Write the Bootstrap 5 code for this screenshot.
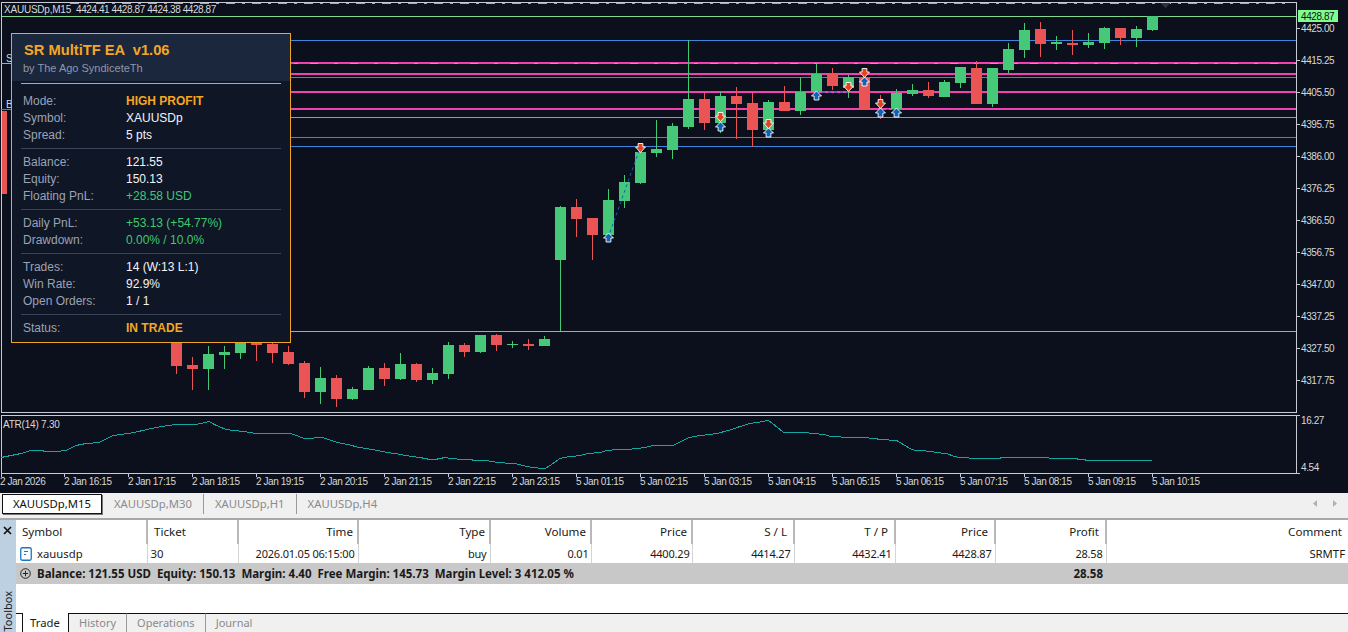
<!DOCTYPE html>
<html lang="en">
<head>
<meta charset="utf-8">
<title>XAUUSDp,M15</title>
<link href="https://cdn.jsdelivr.net/npm/bootstrap@5.3.0/dist/css/bootstrap.min.css" rel="stylesheet">
<style>
html,body{height:632px;overflow:hidden;background:#fff}
.mt-root{width:1348px;height:632px;font-family:"Noto Sans","Open Sans",sans-serif;font-size:11.3px;color:#1a1a1a}
.chart-wrap{height:493px;background:#0b101c}
.chart-svg{display:block}
.chart-svg text{font-family:"Liberation Sans",sans-serif;font-size:10px;fill:#d8d8d8;letter-spacing:-.42px}
.chart-svg text.txt-wide{letter-spacing:-.22px}
.ea-panel{position:absolute;left:11px;top:33px;width:280px;height:310px;background:#0f1626;border:1px solid #f0a52a;font-family:"Liberation Sans",Arial,sans-serif;font-size:12px;line-height:17px;color:#9aa3b5}
.ea-head{height:47px;background:#1a273c;padding:7px 0 0 12px}
.ea-title{font-size:14.7px;font-weight:700;color:#f5a623;line-height:18px;white-space:pre}
.ea-sub{font-size:11px;color:#8f98aa;line-height:14px;margin-top:2px;margin-left:-1px}
.ea-rule-o{height:1px;background:#f0a52a;margin:2px 9px 0}
.ea-sec{margin:0 9px;padding:0 2px;border-top:1px solid #3a4258}
.ea-sec.first{border-top:0;padding-top:9px;padding-bottom:4px}
.ea-s2{padding-top:5px;padding-bottom:4px}
.ea-s3{padding-top:5px;padding-bottom:4px}
.ea-s4{padding-top:5px}
.ea-lab{width:103px}
.v-w{color:#f2f4f8}.v-g{color:#3fc96f}.v-o{color:#f5a623;font-weight:700}
.sym-tabs{height:27px;background:#f0f0f0;border-bottom:2px solid #a8a8a8;padding-left:2px}
.sym-on{width:100px;height:20px;margin-top:1px;background:#fff;border:1px solid #111;box-shadow:1px 1px 0 #777;padding-left:10px;line-height:18px;color:#111}
.sym-off{color:#8a8a8a;line-height:20px;padding:0 11px;margin-top:1px;height:20px}
.sym-on + .sym-off{padding-left:12px}
.sym-sep{border-right:1px solid #9a9a9a}
.sym-arrows{margin-left:auto;padding-right:11px;gap:16px;height:20px}
.tool-rail{width:16px;background:#bcd0e2;position:relative;overflow:hidden}
.tool-x{position:absolute;left:2px;top:5px;width:11px;height:11px}
.tool-name{position:absolute;left:0;bottom:0;writing-mode:vertical-rl;transform:rotate(180deg);font-size:11px;line-height:15px;color:#222}
.grid-tab{width:100%;table-layout:fixed;border-collapse:collapse;color:#1a1a1a}
.grid-tab th{font-weight:400;font-size:11.6px;height:24px;padding:0 6px;border-right:2px solid #b8b8b8;white-space:nowrap;overflow:hidden}
.grid-tab th:nth-child(n+3):nth-child(-n+6){padding-right:4px}
.grid-tab td{height:19px;padding:0 3px;border-right:1px solid #d4d4d4;white-space:nowrap;overflow:hidden;line-height:18px}
.grid-tab td.text-end{font-size:11px;letter-spacing:-.2px}
.grid-tab td:nth-child(5),.grid-tab td:nth-child(6){padding-right:2px}
.grid-tab td:last-child{font-size:11.3px;letter-spacing:0}
.grid-tab th:last-child,.grid-tab td:last-child{border-right:0}
.sum-row{height:21px;background:#c8c8c8;font-weight:700;font-size:11.5px;position:relative;white-space:pre;line-height:21px;padding-left:21px}
.sum-profit{position:absolute;left:1007px;width:80px;text-align:right;top:0}
.plus-ico{position:absolute;left:4px;top:5px}
.sym-ico{vertical-align:-3px;margin:0 5px 0 1px}
.bot-tabs{height:19px;position:relative}
.bot-line{border-top:1px solid #111;background:#f0f0f0;height:19px;flex:1}
.bot-stub{width:6px;border-top:1px solid #111;height:19px}
.bot-on{width:47px;height:19px;background:#fff;border-left:1px solid #111;border-right:1px solid #111;text-align:center;line-height:19px;padding-right:1px}
.bot-off{border-top:1px solid #111;background:#f0f0f0;color:#8a8a8a;height:19px;line-height:18px;padding:0 10px;font-size:11px}
</style>
</head>
<body>
<div class="mt-root d-flex flex-column">
  <div class="chart-wrap position-relative flex-shrink-0">
    <svg class="chart-svg" id="chart" width="1348" height="493" viewBox="0 0 1348 493" xmlns="http://www.w3.org/2000/svg" shape-rendering="crispEdges">
      <g id="frame" fill="none" stroke="#c9cbd2">
        <path d="M1.5 2.5H1296.5V412.5H1.5Z"/>
        <path d="M1.5 415.5H1296.5V473.5H1.5Z"/>
        <path d="M1296 28.5h4M1296 60.5h4M1296 92.5h4M1296 124.5h4M1296 156.5h4M1296 188.5h4M1296 220.5h4M1296 252.5h4M1296 284.5h4M1296 316.5h4M1296 348.5h4M1296 380.5h4M1296 415.5h4M1296 473.5h4"/>
        <path d="M64.5 473v4M128.5 473v4M192.5 473v4M256.5 473v4M320.5 473v4M384.5 473v4M448.5 473v4M512.5 473v4M576.5 473v4M640.5 473v4M704.5 473v4M768.5 473v4M832.5 473v4M896.5 473v4M960.5 473v4M1024.5 473v4M1088.5 473v4M1152.5 473v4M1.5 473v4"/>
      </g>
      <path d="M70 3.5H1292" stroke="#dd9f6c" stroke-dasharray="9 7 3 7" fill="none"/>
      <polygon points="1161,3 1170,3 1165.5,8" fill="#2b3140"/>
      <g fill="none" stroke="#3f86dc">
        <path d="M150 40.5H1296M150 77.5H1296M150 137.5H1296M150 146.5H1296M1 109.5H11"/>
        <path d="M150 117.5H1296" stroke="#7fa0c4"/>
      </g>
      <path d="M1 63.5H11" stroke="#e89b5a"/>
      <path d="M150 331.5H1296" stroke="#a5a8b0"/>
      <path d="M2 16.5H1296" stroke="#83d88f"/>
      <rect x="2" y="111" width="5" height="83" fill="#e95455"/>
      <g fill="#f23fb2">
        <rect x="150" y="62" width="1146" height="2"/>
        <rect x="150" y="73" width="1146" height="2"/>
        <rect x="150" y="91" width="1146" height="2"/>
        <rect x="150" y="108" width="1146" height="2"/>
      </g>
      <path d="M150 63.5H1296" stroke="#e39a5c" stroke-dasharray="8 16 4 12" fill="none"/>
      <g id="candles"></g>
      <g fill="none" stroke="#0f62b4" stroke-dasharray="3 3" shape-rendering="auto">
        <path d="M608 238L640 148"/>
        <path d="M816 92H848"/>
        <path d="M880 109.5H896"/>
      </g>
      <g id="arrows" shape-rendering="auto"></g>
      <polyline id="atr" fill="none" stroke="#14a7a2" stroke-width="1"/>
      <text x="4" y="12.5" class="txt-wide">XAUUSDp,M15</text>
      <text x="76" y="12.5">4424.41 4428.87 4424.38 4428.87</text>
      <text x="6" y="62">S</text>
      <text x="6" y="108">B</text>
      <text x="3" y="428" class="txt-wide">ATR(14) 7.30</text>
      <rect x="1298" y="10" width="40" height="12" fill="#7dff8f"/>
      <text x="1301" y="20" style="fill:#111">4428.87</text>
      <text x="1301" y="32">4425.00</text>
      <text x="1301" y="64">4415.25</text>
      <text x="1301" y="96">4405.50</text>
      <text x="1301" y="128">4395.75</text>
      <text x="1301" y="160">4386.00</text>
      <text x="1301" y="192">4376.25</text>
      <text x="1301" y="224">4366.50</text>
      <text x="1301" y="256">4356.75</text>
      <text x="1301" y="288">4347.00</text>
      <text x="1301" y="320">4337.25</text>
      <text x="1301" y="352">4327.50</text>
      <text x="1301" y="384">4317.75</text>
      <text x="1301" y="424">16.27</text>
      <text x="1301" y="471">4.54</text>
      <text x="0" y="485">2 Jan 2026</text>
      <text x="64" y="485">2 Jan 16:15</text>
      <text x="128" y="485">2 Jan 17:15</text>
      <text x="192" y="485">2 Jan 18:15</text>
      <text x="256" y="485">2 Jan 19:15</text>
      <text x="320" y="485">2 Jan 20:15</text>
      <text x="384" y="485">2 Jan 21:15</text>
      <text x="448" y="485">2 Jan 22:15</text>
      <text x="512" y="485">2 Jan 23:15</text>
      <text x="576" y="485">5 Jan 01:15</text>
      <text x="640" y="485">5 Jan 02:15</text>
      <text x="704" y="485">5 Jan 03:15</text>
      <text x="768" y="485">5 Jan 04:15</text>
      <text x="832" y="485">5 Jan 05:15</text>
      <text x="896" y="485">5 Jan 06:15</text>
      <text x="960" y="485">5 Jan 07:15</text>
      <text x="1024" y="485">5 Jan 08:15</text>
      <text x="1088" y="485">5 Jan 09:15</text>
      <text x="1152" y="485">5 Jan 10:15</text>
    </svg>
    <div class="ea-panel">
      <div class="ea-head">
        <div class="ea-title">SR MultiTF EA  v1.06</div>
        <div class="ea-sub">by The Ago SyndiceteTh</div>
      </div>
      <div class="ea-rule-o"></div>
      <div class="ea-sec first">
        <div class="d-flex"><span class="ea-lab">Mode:</span><span class="v-o">HIGH PROFIT</span></div>
        <div class="d-flex"><span class="ea-lab">Symbol:</span><span class="v-w">XAUUSDp</span></div>
        <div class="d-flex"><span class="ea-lab">Spread:</span><span class="v-w">5 pts</span></div>
      </div>
      <div class="ea-sec ea-s2">
        <div class="d-flex"><span class="ea-lab">Balance:</span><span class="v-w">121.55</span></div>
        <div class="d-flex"><span class="ea-lab">Equity:</span><span class="v-w">150.13</span></div>
        <div class="d-flex"><span class="ea-lab">Floating PnL:</span><span class="v-g">+28.58 USD</span></div>
      </div>
      <div class="ea-sec ea-s2">
        <div class="d-flex"><span class="ea-lab">Daily PnL:</span><span class="v-g">+53.13 (+54.77%)</span></div>
        <div class="d-flex"><span class="ea-lab">Drawdown:</span><span class="v-g">0.00% / 10.0%</span></div>
      </div>
      <div class="ea-sec ea-s3">
        <div class="d-flex"><span class="ea-lab">Trades:</span><span class="v-w">14 (W:13 L:1)</span></div>
        <div class="d-flex"><span class="ea-lab">Win Rate:</span><span class="v-w">92.9%</span></div>
        <div class="d-flex"><span class="ea-lab">Open Orders:</span><span class="v-w">1 / 1</span></div>
      </div>
      <div class="ea-sec ea-s4">
        <div class="d-flex"><span class="ea-lab">Status:</span><span class="v-o">IN TRADE</span></div>
      </div>
    </div>
  </div>

  <div class="sym-tabs d-flex flex-shrink-0">
    <div class="sym-on">XAUUSDp,M15</div>
    <div class="sym-off sym-sep">XAUUSDp,M30</div>
    <div class="sym-off sym-sep">XAUUSDp,H1</div>
    <div class="sym-off">XAUUSDp,H4</div>
    <div class="sym-arrows d-flex align-items-center">
      <svg width="4" height="7" viewBox="0 0 4 7"><path d="M4 0V7L0 3.5Z" fill="#b0b0b0"/></svg>
      <svg width="4" height="7" viewBox="0 0 4 7"><path d="M0 0V7L4 3.5Z" fill="#b0b0b0"/></svg>
    </div>
  </div>

  <div class="d-flex flex-grow-1" style="min-height:0">
    <div class="tool-rail flex-shrink-0">
      <svg class="tool-x" viewBox="0 0 11 11"><path d="M2 2L9 9M9 2L2 9" stroke="#111" stroke-width="1.7" fill="none"/></svg>
      <div class="tool-name">Toolbox</div>
    </div>
    <div class="d-flex flex-column flex-grow-1" style="min-width:0">
      <table class="grid-tab">
        <colgroup><col style="width:131px"><col style="width:91px"><col style="width:120px"><col style="width:132px"><col style="width:101px"><col style="width:101px"><col style="width:102px"><col style="width:101px"><col style="width:100px"><col style="width:111px"><col></colgroup>
        <thead><tr>
          <th>Symbol</th><th>Ticket</th><th class="text-end">Time</th><th class="text-end">Type</th><th class="text-end">Volume</th><th class="text-end">Price</th><th class="text-end">S / L</th><th class="text-end">T / P</th><th class="text-end">Price</th><th class="text-end">Profit</th><th class="text-end">Comment</th>
        </tr></thead>
        <tbody><tr>
          <td><svg class="sym-ico" width="12" height="14" viewBox="0 0 12 14"><rect x=".75" y=".75" width="10.5" height="12.5" rx="1.5" fill="#fff" stroke="#1976c8" stroke-width="1.3"/><path d="M4 4.5h4M4 7.5h2" stroke="#1976c8"/></svg>xauusdp</td>
          <td>30</td><td class="text-end">2026.01.05 06:15:00</td><td class="text-end">buy</td><td class="text-end">0.01</td><td class="text-end">4400.29</td><td class="text-end">4414.27</td><td class="text-end">4432.41</td><td class="text-end">4428.87</td><td class="text-end">28.58</td><td class="text-end">SRMTF</td>
        </tr></tbody>
      </table>
      <div class="sum-row flex-shrink-0"><svg class="plus-ico" width="11" height="11" viewBox="0 0 11 11"><circle cx="5.5" cy="5.5" r="4.8" fill="none" stroke="#222"/><path d="M2.8 5.5h5.4M5.5 2.8v5.4" stroke="#222"/></svg>Balance: 121.55 USD  Equity: 150.13  Margin: 4.40  Free Margin: 145.73  Margin Level: 3 412.05 %<span class="sum-profit">28.58</span></div>
      <div class="flex-grow-1"></div>
      <div class="bot-tabs d-flex flex-shrink-0">
        <div class="bot-stub"></div>
        <div class="bot-on">Trade</div>
        <div class="bot-off sym-sep">History</div>
        <div class="bot-off sym-sep">Operations</div>
        <div class="bot-off">Journal</div>
        <div class="bot-line"></div>
      </div>
    </div>
  </div>
</div>
<script src="https://cdn.jsdelivr.net/npm/bootstrap@5.3.0/dist/js/bootstrap.bundle.min.js"></script>
<script>
const NS='http://www.w3.org/2000/svg';
const G='#45c878',R='#ea5455';
// colour, body top, body bottom, wick high, wick low; one entry per bar, 16px apart from x=171
const bars=[
[R,335,366,330,374],[R,365,369,357,390],[G,354,369,346,390],[G,352,355,346,369],[G,340,353,335,359],[R,338,345,335,361],[R,344,353,340,363],[R,352,364,346,365],
[R,363,392,361,398],[G,378,392,367,404],[R,378,399,375,407],[G,389,399,387,400],[G,368,390,366,390],[R,368,379,363,386],[G,364,379,353,380],[R,364,380,363,382],
[G,373,380,368,384],[G,345,374,342,379],[R,345,352,343,357],[G,335,352,335,353],[R,335,345,334,351],[G,344,345,341,348],[R,344,346,339,350],[G,339,346,336,346],
[G,207,260,206,331],[R,207,219,199,237],[R,218,235,218,260],[G,200,235,189,235],[G,182,201,175,208],[G,152,183,152,184],[G,149,153,120,157],[G,126,150,123,159],
[G,99,127,40,129],[R,99,123,93,130],[G,96,123,92,133],[R,96,104,87,139],[R,103,130,93,147],[G,102,130,100,136],[R,102,111,86,111],[G,92,111,77,115],
[G,74,92,63,92],[R,74,86,68,90],[G,77,88,75,98],[R,77,110,72,110],[R,109,110,95,119],[G,93,109,89,109],[G,90,94,84,96],[R,90,96,82,98],
[G,82,97,80,97],[G,67,83,67,88],[R,68,104,61,104],[G,68,104,68,107],[G,49,70,43,73],[G,30,50,23,58],[R,29,44,22,57],[G,42,44,36,50],
[R,43,45,30,55],[G,42,45,33,48],[G,28,43,27,49],[R,28,38,28,45],[G,29,38,26,47],[G,16,30,16,31]];
const cg=document.getElementById('candles');
function rect(x,y,w,h,f){const r=document.createElementNS(NS,'rect');r.setAttribute('x',x);r.setAttribute('y',y);r.setAttribute('width',w);r.setAttribute('height',h);r.setAttribute('fill',f);cg.appendChild(r);}
bars.forEach((b,i)=>{const x=171+16*i;rect(x+5,b[3],1,b[4]-b[3],b[0]);rect(x,b[1],11,b[2]-b[1],b[0]);});
const ag=document.getElementById('arrows');
function arrow(cx,cy,up){const p=document.createElementNS(NS,'polygon');
  const pts=up?[[0,-5],[5,0],[2.4,0],[2.4,4],[-2.4,4],[-2.4,0],[-5,0]]:[[-2.4,-4.5],[2.4,-4.5],[2.4,-1],[5,-1],[0,4.5],[-5,-1],[-2.4,-1]];
  p.setAttribute('points',pts.map(a=>(cx+a[0])+','+(cy+a[1])).join(' '));
  p.setAttribute('fill',up?'#0f62b4':'#e5431d');p.setAttribute('stroke','#fff');p.setAttribute('stroke-width','.9');ag.appendChild(p);}
[[608.5,238],[720.5,127],[768.5,133],[816.5,96],[864.5,82],[880.5,113],[896.5,113]].forEach(a=>arrow(a[0],a[1],true));
[[640.5,148],[720.5,117],[768.5,124],[848.5,87],[864.5,73],[880.5,104]].forEach(a=>arrow(a[0],a[1],false));
// ATR line: [x, y*3 offset from 410]
const a1=[[0,142],[30,135],[60,128],[90,121],[120,121],[135,124],[165,124],[195,120],[225,106],[255,100],[295,97],[335,76],[360,71],[400,65],[450,55],[500,45],[525,41],[585,41],[625,34],[640,42],[675,58],[700,61],[730,63],[765,70],[870,70],[910,85],[935,85],[945,82],[965,82],[1010,97],[1040,103],[1075,112],[1115,118],[1160,125],[1200,132]];
const a2=[[0,133],[35,137],[60,142],[90,148],[105,148],[135,142],[155,143],[185,148],[215,148],[220,151],[265,151],[270,154],[300,155],[330,159],[345,160],[380,168],[400,172],[425,173],[435,175],[450,165],[480,143],[490,140],[515,139],[540,134],[565,130],[600,125],[620,121],[650,118],[680,117],[710,113],[735,110],[760,106],[820,106],[860,84],[880,78],[905,74],[950,70],[985,60],[1020,48],[1050,40],[1070,35],[1105,31],[1110,33],[1140,58]];
const a3=[[0,58],[12,67],[85,67],[90,70],[115,70],[120,73],[135,73],[150,78],[180,78],[185,81],[265,82],[270,85],[290,85],[295,88],[325,88],[330,91],[350,91],[370,102],[395,118],[410,121],[435,121],[440,124],[460,124],[465,127],[500,129],[515,134],[535,140],[565,142],[570,145],[660,145],[661,142],[805,142],[810,145],[890,145],[895,148],[915,148],[916,151],[1115,151]];
const pts=[];
a1.forEach(p=>pts.push((1+p[0]/3)+','+(410.5+Math.round(p[1]/3))));
a2.forEach(p=>pts.push((400+p[0]/3)+','+(410.5+Math.round(p[1]/3))));
a3.forEach(p=>pts.push((780+p[0]/3)+','+(410.5+Math.round(p[1]/3))));
document.getElementById('atr').setAttribute('points',pts.join(' '));
</script>
</body>
</html>
